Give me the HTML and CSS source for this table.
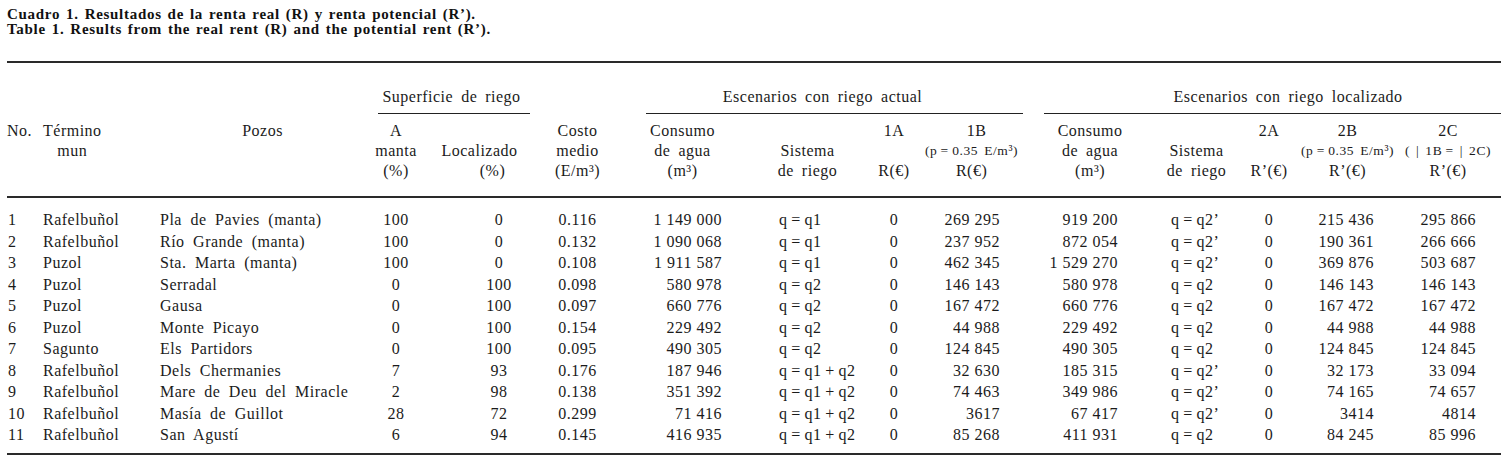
FILE: index.html
```html
<!DOCTYPE html>
<html lang="es">
<head>
<meta charset="utf-8">
<title>Cuadro 1</title>
<link rel="stylesheet" href="styles.css">
</head>
<body>
<div class="page">
  <div class="caption">
    <div>Cuadro 1. Resultados de la renta real (R) y renta potencial (R’).</div>
    <div>Table 1. Results from the real rent (R) and the potential rent (R’).</div>
  </div>
  <table class="tbl">
    <colgroup>
      <col class="w1"><col class="w2"><col class="w3"><col class="w4"><col class="w5">
      <col class="w6"><col class="w7"><col class="w8"><col class="w9"><col class="w10">
      <col class="w11"><col class="w12"><col class="w13"><col class="w14"><col class="w15">
    </colgroup>
    <thead>
      <tr class="grp-row">
        <th colspan="3"></th>
        <th colspan="2"><div class="gtext">Superficie de riego</div><div class="grule g-sup"></div></th>
        <th></th>
        <th colspan="4"><div class="gtext">Escenarios con riego actual</div><div class="grule g-act"></div></th>
        <th colspan="5"><div class="gtext g-loc-text">Escenarios con riego localizado</div><div class="grule g-loc"></div></th>
      </tr>
      <tr class="hd-row">
        <th class="al"><span class="ln">No.</span></th>
        <th class="al"><div class="stack"><span class="ln">Término</span><span class="ln">mun</span></div></th>
        <th><span class="ln">Pozos</span></th>
        <th><span class="ln">A</span><span class="ln">manta</span><span class="ln">(%)</span></th>
        <th><span class="ln"></span><span class="ln">Localizado</span><span class="ln pct">(%)</span></th>
        <th><span class="ln">Costo</span><span class="ln">medio</span><span class="ln">(E/m³)</span></th>
        <th><span class="ln">Consumo</span><span class="ln">de agua</span><span class="ln">(m³)</span></th>
        <th><span class="ln"></span><span class="ln">Sistema</span><span class="ln">de riego</span></th>
        <th><span class="ln">1A</span><span class="ln"></span><span class="ln">R(€)</span></th>
        <th><span class="ln b1">1B</span><span class="ln sm">(p&thinsp;=&thinsp;0.35 E/m³)</span><span class="ln">R(€)</span></th>
        <th><span class="ln">Consumo</span><span class="ln">de agua</span><span class="ln">(m³)</span></th>
        <th><span class="ln"></span><span class="ln">Sistema</span><span class="ln">de riego</span></th>
        <th><span class="ln">2A</span><span class="ln"></span><span class="ln">R’(€)</span></th>
        <th><span class="ln">2B</span><span class="ln sm">(p&thinsp;=&thinsp;0.35 E/m³)</span><span class="ln">R’(€)</span></th>
        <th><span class="ln">2C</span><span class="ln sm">( | 1B&thinsp;= | 2C)</span><span class="ln">R’(€)</span></th>
      </tr>
    </thead>
    <tbody>
      <tr><td>1</td><td>Rafelbuñol</td><td>Pla de Pavies (manta)</td><td>100</td><td>0</td><td>0.116</td><td>1 149 000</td><td>q&thinsp;=&thinsp;q1</td><td>0</td><td>269 295</td><td>919 200</td><td>q&thinsp;=&thinsp;q2’</td><td>0</td><td>215 436</td><td>295 866</td></tr>
      <tr><td>2</td><td>Rafelbuñol</td><td>Río Grande (manta)</td><td>100</td><td>0</td><td>0.132</td><td>1 090 068</td><td>q&thinsp;=&thinsp;q1</td><td>0</td><td>237 952</td><td>872 054</td><td>q&thinsp;=&thinsp;q2’</td><td>0</td><td>190 361</td><td>266 666</td></tr>
      <tr><td>3</td><td>Puzol</td><td>Sta. Marta (manta)</td><td>100</td><td>0</td><td>0.108</td><td>1 911 587</td><td>q&thinsp;=&thinsp;q1</td><td>0</td><td>462 345</td><td>1 529 270</td><td>q&thinsp;=&thinsp;q2’</td><td>0</td><td>369 876</td><td>503 687</td></tr>
      <tr><td>4</td><td>Puzol</td><td>Serradal</td><td>0</td><td>100</td><td>0.098</td><td>580 978</td><td>q&thinsp;=&thinsp;q2</td><td>0</td><td>146 143</td><td>580 978</td><td>q&thinsp;=&thinsp;q2</td><td>0</td><td>146 143</td><td>146 143</td></tr>
      <tr><td>5</td><td>Puzol</td><td>Gausa</td><td>0</td><td>100</td><td>0.097</td><td>660 776</td><td>q&thinsp;=&thinsp;q2</td><td>0</td><td>167 472</td><td>660 776</td><td>q&thinsp;=&thinsp;q2</td><td>0</td><td>167 472</td><td>167 472</td></tr>
      <tr><td>6</td><td>Puzol</td><td>Monte Picayo</td><td>0</td><td>100</td><td>0.154</td><td>229 492</td><td>q&thinsp;=&thinsp;q2</td><td>0</td><td>44 988</td><td>229 492</td><td>q&thinsp;=&thinsp;q2</td><td>0</td><td>44 988</td><td>44 988</td></tr>
      <tr><td>7</td><td>Sagunto</td><td>Els Partidors</td><td>0</td><td>100</td><td>0.095</td><td>490 305</td><td>q&thinsp;=&thinsp;q2</td><td>0</td><td>124 845</td><td>490 305</td><td>q&thinsp;=&thinsp;q2</td><td>0</td><td>124 845</td><td>124 845</td></tr>
      <tr><td>8</td><td>Rafelbuñol</td><td>Dels Chermanies</td><td>7</td><td>93</td><td>0.176</td><td>187 946</td><td>q&thinsp;=&thinsp;q1&thinsp;+&thinsp;q2</td><td>0</td><td>32 630</td><td>185 315</td><td>q&thinsp;=&thinsp;q2’</td><td>0</td><td>32 173</td><td>33 094</td></tr>
      <tr><td>9</td><td>Rafelbuñol</td><td>Mare de Deu del Miracle</td><td>2</td><td>98</td><td>0.138</td><td>351 392</td><td>q&thinsp;=&thinsp;q1&thinsp;+&thinsp;q2</td><td>0</td><td>74 463</td><td>349 986</td><td>q&thinsp;=&thinsp;q2’</td><td>0</td><td>74 165</td><td>74 657</td></tr>
      <tr><td>10</td><td>Rafelbuñol</td><td>Masía de Guillot</td><td>28</td><td>72</td><td>0.299</td><td>71 416</td><td>q&thinsp;=&thinsp;q1&thinsp;+&thinsp;q2</td><td>0</td><td>3617</td><td>67 417</td><td>q&thinsp;=&thinsp;q2’</td><td>0</td><td>3414</td><td>4814</td></tr>
      <tr><td>11</td><td>Rafelbuñol</td><td>San Agustí</td><td>6</td><td>94</td><td>0.145</td><td>416 935</td><td>q&thinsp;=&thinsp;q1&thinsp;+&thinsp;q2</td><td>0</td><td>85 268</td><td>411 931</td><td>q&thinsp;=&thinsp;q2</td><td>0</td><td>84 245</td><td>85 996</td></tr>
    </tbody>
  </table>
</div>
</body>
</html>
```

FILE: styles.css
```css
html, body {
  margin: 0;
  padding: 0;
  background: #ffffff;
}

body {
  font-family: "Liberation Serif", "Times New Roman", serif;
  color: #1b1b1b;
}

.page {
  padding: 7px 5px 0 7px;
  width: 1494px;
}

.caption {
  font-weight: bold;
  font-size: 15px;
  line-height: 15px;
  letter-spacing: 0.7px;
  word-spacing: 1.5px;
  color: #111;
}

.tbl {
  margin-top: 24px;
  border-collapse: separate;
  border-spacing: 0;
  table-layout: fixed;
  width: 1494px;
  font-size: 16px;
  letter-spacing: 0.5px;
  word-spacing: 0;
}

.w1 { width: 36px; }
.w2 { width: 114px; }
.w3 { width: 211px; }
.w4 { width: 56px; }
.w5 { width: 111px; }
.w6 { width: 85px; }
.w7 { width: 125px; }
.w8 { width: 125px; }
.w9 { width: 48px; }
.w10 { width: 107px; }
.w11 { width: 130px; }
.w12 { width: 83px; }
.w13 { width: 62px; }
.w14 { width: 95px; }
.w15 { width: 106px; }

.tbl th,
.tbl td {
  padding: 0;
  font-weight: normal;
  white-space: nowrap;
}

.tbl th {
  word-spacing: 3.5px;
}

/* group header row */
.grp-row th {
  border-top: 2px solid #2a2a2a;
  padding-top: 24px;
  text-align: center;
  vertical-align: top;
}

.gtext {
  height: 20px;
  line-height: 20px;
}

.g-loc-text {
  padding-left: 50px;
}

.grule {
  margin-top: 6px;
  border-top: 1px solid #222;
}

.g-sup { margin-left: 10px; margin-right: 5px; }
.g-act { margin-left: 26px; margin-right: 2px; }
.g-loc { margin-left: 19px; margin-right: 0; }

/* column header row */
.hd-row th {
  padding: 7px 0 15px;
  border-bottom: 2px solid #2a2a2a;
  vertical-align: top;
  text-align: center;
}

.hd-row th.al {
  text-align: left;
}

.stack {
  display: inline-block;
  text-align: center;
}

.ln {
  display: block;
  height: 20px;
  line-height: 20px;
}

.ln.pct {
  padding-left: 26px;
}

.ln.b1 {
  padding-left: 10px;
}

.ln.sm {
  font-size: 13.5px;
  letter-spacing: 0.6px;
  word-spacing: 2px;
}

/* body rows */
.tbl tbody td {
  height: 21.5px;
  line-height: 21.5px;
  vertical-align: middle;
}

.tbl tbody tr:first-child td {
  padding-top: 11px;
}

.tbl tbody tr:last-child td {
  padding-bottom: 7.5px;
  border-bottom: 2px solid #2a2a2a;
}

.tbl tbody td:nth-child(1) { text-align: left; padding-left: 1px; }
.tbl tbody td:nth-child(2) { text-align: left; word-spacing: 4px; }
.tbl tbody td:nth-child(3) { text-align: left; padding-left: 3px; word-spacing: 4px; }
.tbl tbody td:nth-child(4) { text-align: center; }
.tbl tbody td:nth-child(5) { text-align: center; padding-left: 39px; }
.tbl tbody td:nth-child(6) { text-align: center; }
.tbl tbody td:nth-child(7) { text-align: right; padding-right: 23px; }
.tbl tbody td:nth-child(8) { text-align: left; padding-left: 34px; }
.tbl tbody td:nth-child(9) { text-align: center; }
.tbl tbody td:nth-child(10) { text-align: right; padding-right: 25px; }
.tbl tbody td:nth-child(11) { text-align: right; padding-right: 37px; }
.tbl tbody td:nth-child(12) { text-align: left; padding-left: 16px; }
.tbl tbody td:nth-child(13) { text-align: center; }
.tbl tbody td:nth-child(14) { text-align: right; padding-right: 21px; }
.tbl tbody td:nth-child(15) { text-align: right; padding-right: 25px; }
```
